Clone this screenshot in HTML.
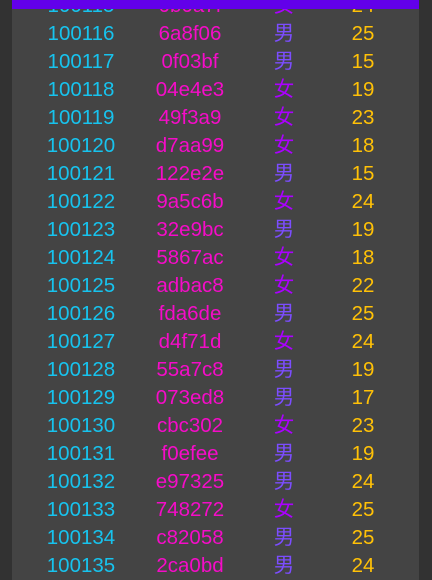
<!DOCTYPE html><html><head><style>
body{margin:0;width:432px;height:580px;background:#323232;overflow:hidden;position:relative;font-family:"Liberation Sans","Noto Sans CJK SC",sans-serif}
#p{position:absolute;left:12px;top:0;width:407px;height:580px;background:#444444;overflow:hidden}
.r{position:absolute;left:0;width:407px;height:28px;line-height:30px;font-size:20.5px}
.r span{position:absolute;top:0;text-align:center;width:100px}
.a{left:19px;color:#17c3ee}.b{left:128px;color:#f50cc8}.c{left:222px}.d{left:301px;color:#ffc107}
.m{color:#7c4dff}.f{color:#aa00ff}
#bar{position:absolute;left:12px;top:0;width:407px;height:9px;background:#6200ea}
</style></head><body><div id="p">
<div class="r" style="top:-9px"><span class="a">100115</span><span class="b">0b0a7f</span><span class="c f">女</span><span class="d">24</span></div>
<div class="r" style="top:19px"><span class="a">100116</span><span class="b">6a8f06</span><span class="c m">男</span><span class="d">25</span></div>
<div class="r" style="top:47px"><span class="a">100117</span><span class="b">0f03bf</span><span class="c m">男</span><span class="d">15</span></div>
<div class="r" style="top:75px"><span class="a">100118</span><span class="b">04e4e3</span><span class="c f">女</span><span class="d">19</span></div>
<div class="r" style="top:103px"><span class="a">100119</span><span class="b">49f3a9</span><span class="c f">女</span><span class="d">23</span></div>
<div class="r" style="top:131px"><span class="a">100120</span><span class="b">d7aa99</span><span class="c f">女</span><span class="d">18</span></div>
<div class="r" style="top:159px"><span class="a">100121</span><span class="b">122e2e</span><span class="c m">男</span><span class="d">15</span></div>
<div class="r" style="top:187px"><span class="a">100122</span><span class="b">9a5c6b</span><span class="c f">女</span><span class="d">24</span></div>
<div class="r" style="top:215px"><span class="a">100123</span><span class="b">32e9bc</span><span class="c m">男</span><span class="d">19</span></div>
<div class="r" style="top:243px"><span class="a">100124</span><span class="b">5867ac</span><span class="c f">女</span><span class="d">18</span></div>
<div class="r" style="top:271px"><span class="a">100125</span><span class="b">adbac8</span><span class="c f">女</span><span class="d">22</span></div>
<div class="r" style="top:299px"><span class="a">100126</span><span class="b">fda6de</span><span class="c m">男</span><span class="d">25</span></div>
<div class="r" style="top:327px"><span class="a">100127</span><span class="b">d4f71d</span><span class="c f">女</span><span class="d">24</span></div>
<div class="r" style="top:355px"><span class="a">100128</span><span class="b">55a7c8</span><span class="c m">男</span><span class="d">19</span></div>
<div class="r" style="top:383px"><span class="a">100129</span><span class="b">073ed8</span><span class="c m">男</span><span class="d">17</span></div>
<div class="r" style="top:411px"><span class="a">100130</span><span class="b">cbc302</span><span class="c f">女</span><span class="d">23</span></div>
<div class="r" style="top:439px"><span class="a">100131</span><span class="b">f0efee</span><span class="c m">男</span><span class="d">19</span></div>
<div class="r" style="top:467px"><span class="a">100132</span><span class="b">e97325</span><span class="c m">男</span><span class="d">24</span></div>
<div class="r" style="top:495px"><span class="a">100133</span><span class="b">748272</span><span class="c f">女</span><span class="d">25</span></div>
<div class="r" style="top:523px"><span class="a">100134</span><span class="b">c82058</span><span class="c m">男</span><span class="d">25</span></div>
<div class="r" style="top:551px"><span class="a">100135</span><span class="b">2ca0bd</span><span class="c m">男</span><span class="d">24</span></div>
</div><div id="bar"></div></body></html>
